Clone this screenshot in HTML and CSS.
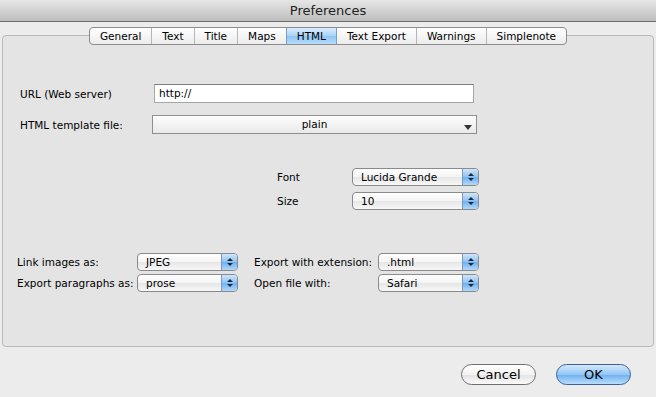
FILE: index.html
```html
<!DOCTYPE html>
<html lang="en">
<head>
    <meta charset="UTF-8">
    <title>Preferences</title>
    <link rel="stylesheet" href="styles.css">
</head>
<body>
    <div class="titlebar">Preferences</div>
    <div class="tabbox">
        <div class="tabs">
            <span class="tab">General</span>
            <span class="tab">Text</span>
            <span class="tab">Title</span>
            <span class="tab">Maps</span>
            <span class="tab selected">HTML</span>
            <span class="tab">Text Export</span>
            <span class="tab">Warnings</span>
            <span class="tab">Simplenote</span>
        </div>

        <div class="row row-url">
            <label class="label-wide">URL (Web server)</label>
            <div class="textfield">http://</div>
        </div>
        <div class="row row-template">
            <label class="label-wide">HTML template file:</label>
            <div class="squarepopup">plain<span class="down"></span></div>
        </div>

        <div class="row row-font">
            <label class="label-font">Font</label>
            <div class="popup w126">Lucida Grande<span class="stepper"></span></div>
        </div>
        <div class="row row-size">
            <label class="label-font">Size</label>
            <div class="popup w126">10<span class="stepper"></span></div>
        </div>

        <div class="row row-link">
            <label class="label-left">Link images as:</label>
            <div class="popup w100">JPEG<span class="stepper"></span></div>
            <label class="label-right">Export with extension:</label>
            <div class="popup w100">.html<span class="stepper"></span></div>
        </div>
        <div class="row row-para">
            <label class="label-left">Export paragraphs as:</label>
            <div class="popup w100">prose<span class="stepper"></span></div>
            <label class="label-right">Open file with:</label>
            <div class="popup w100">Safari<span class="stepper"></span></div>
        </div>
    </div>
    <div class="buttons">
        <button class="btn">Cancel</button>
        <button class="btn default">OK</button>
    </div>
</body>
</html>
```

FILE: styles.css
```css
body {
    margin: 0;
    width: 656px;
    height: 397px;
    overflow: hidden;
    background: #ececec;
    font-family: 'DejaVu Sans', Verdana, sans-serif;
    font-size: 10.5px;
    color: #000;
}

.titlebar {
    height: 21px;
    line-height: 22px;
    text-align: center;
    font-size: 13px;
    background: linear-gradient(#e6e6e6, #bdbdbd);
    border-bottom: 1px solid #6b6b6b;
    color: #222;
}

.tabbox {
    margin: 13px 2px 0 2px;
    height: 310px;
    border: 1px solid #b9b9b9;
    border-radius: 4px;
    background: #e4e4e4;
}

.tabs {
    display: flex;
    justify-content: center;
    margin: -9px auto 0 auto;
    width: max-content;
    height: 16px;
    border: 1px solid #8c8c8c;
    border-radius: 4px;
    background: linear-gradient(#ffffff, #ececec);
    overflow: hidden;
}

.tab {
    line-height: 16px;
    padding: 0 10px;
    border-left: 1px solid #b5b5b5;
    font-size: 10.5px;
}

.tab:first-child {
    border-left: none;
}

.tab.selected {
    background: linear-gradient(#d9ecfd, #a9d3fa 50%, #8ec4f5 51%, #b7dcfb);
    border-left-color: #7a9cc4;
    border-right: 1px solid #7a9cc4;
}

.tab.selected + .tab {
    border-left: none;
}

.row {
    display: flex;
    align-items: center;
}

.row label {
    white-space: nowrap;
}

.row-url { margin-top: 39px; height: 19px; }
.row-template { margin-top: 12px; height: 19px; }
.row-font { margin-top: 34px; height: 18px; }
.row-size { margin-top: 6px; height: 18px; }
.row-link { margin-top: 43px; height: 18px; }
.row-para { margin-top: 3px; height: 18px; }

.label-wide {
    width: 134px;
    padding-left: 17px;
}

.row-template .label-wide {
    width: 132px;
}

.label-font {
    width: 75px;
    padding-left: 274px;
}

.label-left {
    width: 120px;
    padding-left: 14px;
}

.label-right {
    width: 124px;
    padding-left: 16px;
}

.textfield {
    width: 314px;
    height: 17px;
    line-height: 17px;
    padding-left: 4px;
    background: #fff;
    border: 1px solid #a6a6a6;
    border-top-color: #7d7d7d;
}

.squarepopup {
    position: relative;
    width: 323px;
    height: 17px;
    line-height: 17px;
    text-align: center;
    background: linear-gradient(#fdfdfd, #e9e9e9);
    border: 1px solid #8f8f8f;
}

.down {
    position: absolute;
    right: 4px;
    top: 9px;
    border-left: 4px solid transparent;
    border-right: 4px solid transparent;
    border-top: 5px solid #333;
}

.popup {
    position: relative;
    height: 16px;
    line-height: 16px;
    padding-left: 8px;
    border: 1px solid #8a8a8a;
    border-radius: 4px;
    background: linear-gradient(#ffffff, #f4f4f4 50%, #e6e6e6 51%, #f7f7f7);
    overflow: hidden;
}

.w126 { width: 117px; }
.w100 { width: 91px; }

.stepper {
    position: absolute;
    top: 0;
    right: 0;
    width: 15px;
    height: 16px;
    border-left: 1px solid #7b98bf;
    background: linear-gradient(#cfe5fb, #8fc2f3 50%, #6eb0ef 51%, #b1d8fb);
}

.stepper::before,
.stepper::after {
    content: "";
    position: absolute;
    left: 5px;
    border-left: 3px solid transparent;
    border-right: 3px solid transparent;
}

.stepper::before {
    top: 4px;
    border-bottom: 3px solid #1d2a3a;
}

.stepper::after {
    top: 9px;
    border-top: 3px solid #1d2a3a;
}

.buttons {
    display: flex;
    justify-content: flex-end;
    gap: 20px;
    margin: 17px 25px 0 0;
}

.btn {
    width: 75px;
    height: 21px;
    padding: 0;
    font-family: 'DejaVu Sans', Verdana, sans-serif;
    font-size: 13px;
    color: #000;
    border: 1px solid #6f6f6f;
    border-radius: 11px;
    background: linear-gradient(#ffffff, #f2f2f2 50%, #e2e2e2 51%, #fbfbfb);
}

.btn.default {
    border-color: #3d5f93;
    background: linear-gradient(#d4e8fc, #93c6f4 50%, #6db0ef 51%, #b8defd);
}
```
